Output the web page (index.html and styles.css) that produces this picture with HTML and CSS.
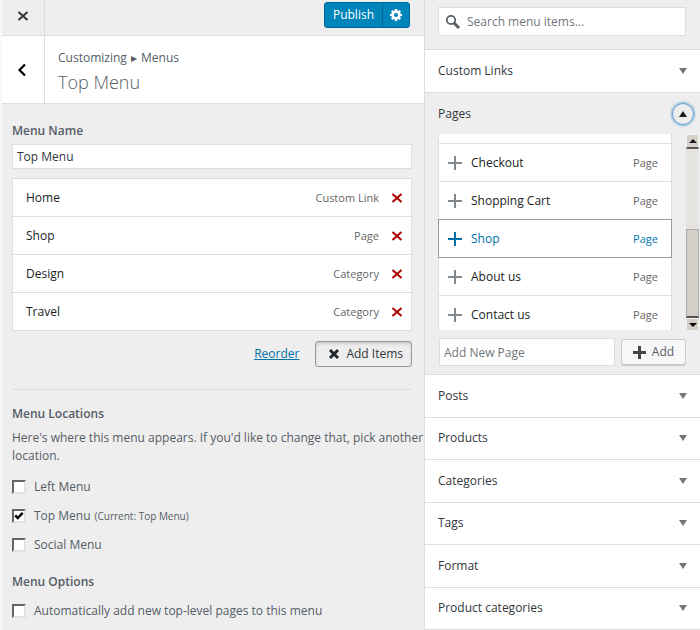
FILE: index.html
```html
<!DOCTYPE html>
<html lang="en">
<head>
  <meta charset="UTF-8" />
  <meta name="viewport" content="width=device-width, initial-scale=1.0"/>
  <title>Customize: Top Menu</title>
  <link rel="stylesheet" href="styles.css">
</head>
<body>
  <div class="customizer">
    <main class="controls">
      <header class="topbar">
        <button class="close" type="button" aria-label="Close">
          <svg width="12" height="12" viewBox="0 0 12 12"><path d="M1.5 2l9 8M10.5 2l-9 8" stroke="#333b42" stroke-width="2.2"/></svg>
        </button>
        <div class="publish">
          <button class="save" type="button">Publish</button>
          <button class="gear" type="button" aria-label="Publish settings">
            <svg width="14" height="14" viewBox="0 0 14 14">
              <g stroke="#fff" stroke-width="2.6"><path d="M7 1v12M1 7h12M2.8 2.8l8.4 8.4M11.2 2.8l-8.4 8.4"/></g>
              <circle cx="7" cy="7" r="4.4" fill="#fff"/>
              <circle cx="7" cy="7" r="2" fill="#0085ba"/>
            </svg>
          </button>
        </div>
      </header>

      <div class="section-title">
        <button class="back" type="button" aria-label="Back">
          <svg width="12" height="14" viewBox="0 0 12 14"><path d="M9 1.5L3.5 7 9 12.5" fill="none" stroke="#000" stroke-width="2.2"/></svg>
        </button>
        <div class="titles">
          <span class="crumbs">Customizing <span class="arrow">&#9656;</span> Menus</span>
          <h1>Top Menu</h1>
        </div>
      </div>

      <div class="panel">
        <label class="heading" for="menuName">Menu Name</label>
        <input class="text-field menu-name" id="menuName" type="text" value="Top Menu">

        <ul class="items">
          <li><span class="name">Home</span><span class="type">Custom Link</span><button class="remove" type="button" aria-label="Remove Home"><svg width="12" height="12" viewBox="0 0 12 12"><path d="M1.5 2l9 8M10.5 2l-9 8"/></svg></button></li>
          <li><span class="name">Shop</span><span class="type">Page</span><button class="remove" type="button" aria-label="Remove Shop"><svg width="12" height="12" viewBox="0 0 12 12"><path d="M1.5 2l9 8M10.5 2l-9 8"/></svg></button></li>
          <li><span class="name">Design</span><span class="type">Category</span><button class="remove" type="button" aria-label="Remove Design"><svg width="12" height="12" viewBox="0 0 12 12"><path d="M1.5 2l9 8M10.5 2l-9 8"/></svg></button></li>
          <li><span class="name">Travel</span><span class="type">Category</span><button class="remove" type="button" aria-label="Remove Travel"><svg width="12" height="12" viewBox="0 0 12 12"><path d="M1.5 2l9 8M10.5 2l-9 8"/></svg></button></li>
        </ul>

        <div class="actions">
          <a class="reorder" href="#">Reorder</a>
          <button class="button add-items" type="button">
            <svg width="12" height="12" viewBox="0 0 12 12"><path d="M2 2l8 8M10 2l-8 8" stroke="#23282d" stroke-width="3"/></svg>
            Add Items
          </button>
        </div>

        <hr>

        <h2 class="heading">Menu Locations</h2>
        <p class="description">Here's where this menu appears. If you'd like to change that, pick another location.</p>
        <div class="checks">
          <label><input type="checkbox">Left Menu</label>
          <label><input type="checkbox" checked>Top Menu <small>(Current: Top Menu)</small></label>
          <label><input type="checkbox">Social Menu</label>
        </div>

        <h2 class="heading">Menu Options</h2>
        <div class="checks options">
          <label><input type="checkbox">Automatically add new top-level pages to this menu</label>
        </div>
      </div>
    </main>

    <aside class="available">
      <div class="search">
        <label class="search-box">
          <svg width="16" height="16" viewBox="0 0 16 16"><circle cx="6" cy="6" r="4.2" fill="none" stroke="#555d66" stroke-width="1.8"/><path d="M9 9l5 5" stroke="#555d66" stroke-width="3"/></svg>
          <input type="search" placeholder="Search menu items..." aria-label="Search menu items">
        </label>
      </div>

      <button class="accordion" type="button">Custom Links<span class="caret"></span></button>

      <section class="pages">
        <button class="accordion open" type="button" aria-expanded="true">Pages<span class="ring"><span class="caret up"></span></span></button>
        <div class="scroller">
          <ul class="page-list">
            <li class="cut"></li>
            <li><svg class="plus" width="14" height="14" viewBox="0 0 14 14"><path d="M7 0v14M0 7h14"/></svg><span class="name">Checkout</span><span class="type">Page</span></li>
            <li><svg class="plus" width="14" height="14" viewBox="0 0 14 14"><path d="M7 0v14M0 7h14"/></svg><span class="name">Shopping Cart</span><span class="type">Page</span></li>
            <li class="selected"><svg class="plus" width="14" height="14" viewBox="0 0 14 14"><path d="M7 0v14M0 7h14"/></svg><span class="name">Shop</span><span class="type">Page</span></li>
            <li><svg class="plus" width="14" height="14" viewBox="0 0 14 14"><path d="M7 0v14M0 7h14"/></svg><span class="name">About us</span><span class="type">Page</span></li>
            <li><svg class="plus" width="14" height="14" viewBox="0 0 14 14"><path d="M7 0v14M0 7h14"/></svg><span class="name">Contact us</span><span class="type">Page</span></li>
          </ul>
          <div class="scrollbar" aria-hidden="true">
            <span class="step"><span class="caret up"></span></span>
            <span class="track"></span>
            <span class="thumb"></span>
            <span class="step"><span class="caret"></span></span>
          </div>
        </div>
        <div class="new-page">
          <input class="text-field" type="text" placeholder="Add New Page" aria-label="Add New Page">
          <button class="button add" type="button">
            <svg width="13" height="13" viewBox="0 0 13 13"><path d="M6.5 0v13M0 6.5h13" stroke="#444" stroke-width="3"/></svg>
            Add
          </button>
        </div>
      </section>

      <div class="groups">
        <button class="accordion" type="button">Posts<span class="caret"></span></button>
        <button class="accordion" type="button">Products<span class="caret"></span></button>
        <button class="accordion" type="button">Categories<span class="caret"></span></button>
        <button class="accordion" type="button">Tags<span class="caret"></span></button>
        <button class="accordion" type="button">Format<span class="caret"></span></button>
        <button class="accordion" type="button">Product categories<span class="caret"></span></button>
      </div>
    </aside>
  </div>
</body>
</html>
```

FILE: styles.css
```css
* {
  box-sizing: border-box;
}
body {
  margin: 0;
  background: #eee;
  color: #555d66;
  font-family: "Open Sans", "Noto Sans", sans-serif;
  font-size: 12px;
  line-height: 18px;
}
button,
input {
  font: inherit;
  color: inherit;
}
button {
  margin: 0;
  padding: 0;
  border: 0;
  background: none;
}
svg {
  display: block;
  flex: none;
}
ul {
  list-style: none;
  margin: 0;
  padding: 0;
}
.customizer {
  display: grid;
  grid-template-columns: minmax(0, 17fr) minmax(0, 11fr);
  min-height: 100vh;
}

/* left column */
.controls {
  border-left: 2px solid #f8f8f8;
  border-right: 1px solid #ddd;
}
.topbar {
  display: flex;
  justify-content: space-between;
  height: 36px;
  border-bottom: 1px solid #ddd;
}
.close,
.back {
  display: flex;
  align-items: center;
  justify-content: center;
  width: 43px;
  border-right: 1px solid #ddd;
}
.close {
  padding-bottom: 4px;
}
.back {
  padding-right: 2px;
}
.publish {
  display: flex;
  height: 26px;
  margin: 2px 14px 0 0;
  border: 1px solid #006799;
  border-radius: 3px;
  background: #0085ba;
  color: #fff;
}
.save {
  padding: 0 8px;
}
.gear {
  display: flex;
  align-items: center;
  padding: 0 6px;
  border-left: 1px solid #006799;
}
.section-title {
  display: flex;
  height: 68px;
  background: #fff;
  border-bottom: 1px solid #ddd;
}
.titles {
  padding: 13px 13px 0;
}
.crumbs {
  display: block;
}
.arrow {
  margin: 0 1px;
}
h1 {
  margin: 2px 0 0;
  font-size: 18px;
  font-weight: 300;
  line-height: 26px;
}
.panel {
  padding: 17px 12px 8px 10px;
}
.heading {
  display: block;
  margin: 0;
  font-size: 12px;
  font-weight: 600;
  line-height: 20px;
}
.text-field {
  width: 100%;
  border: 1px solid #ddd;
  background: #fff;
  padding: 0 4px;
  color: #32373c;
}
.text-field::placeholder,
.search-box input::placeholder {
  color: #72777c;
  opacity: 1;
}
.menu-name {
  display: block;
  height: 25px;
  margin: 3px 0 9px;
}
.items li,
.page-list li {
  display: flex;
  align-items: center;
  height: 39px;
  border: 1px solid #ddd;
  background: #fff;
}
.items li {
  padding: 0 8px 0 13px;
}
.items li + li,
.page-list li + li {
  margin-top: -1px;
}
.name {
  flex: 1;
  color: #191e23;
  font-weight: 500;
}
.type {
  font-size: 11px;
  color: #666;
}
.remove {
  margin-left: 12px;
}
.remove path {
  stroke: #a00;
  stroke-width: 2;
}
.actions {
  display: flex;
  align-items: center;
  justify-content: flex-end;
  gap: 16px;
  margin: 10px 0 22px;
}
.reorder {
  color: #0073aa;
}
.button {
  display: flex;
  align-items: center;
  justify-content: center;
  gap: 6px;
  height: 26px;
  border: 1px solid #ccc;
  border-radius: 3px;
  background: #f7f7f7;
  box-shadow: 0 1px 0 #ccc;
}
.add-items {
  gap: 6px;
  padding: 0 8px 0 12px;
  border-color: #999;
  background: #eee;
  box-shadow: inset 0 2px 4px -2px #999;
  color: #32373c;
}
hr {
  margin: 0 0 14px;
  border: 0;
  border-top: 1px solid #ddd;
}
.description {
  margin: 5px -12px 13px 0;
}
.checks {
  display: flex;
  flex-direction: column;
  gap: 11px;
  margin-bottom: 18px;
}
.checks label {
  display: flex;
  align-items: center;
}
.options {
  margin: 10px 0 0;
}
.checks small {
  margin-left: 4px;
  font-size: 10px;
}
.checks input {
  appearance: none;
  width: 14px;
  height: 14px;
  margin: 0 8px 0 0;
  border: 2px solid;
  border-color: #666 #e4e2de #e4e2de #666;
  background: #fff center / 10px 10px no-repeat;
}
.checks input:checked {
  background-image: url("data:image/svg+xml,%3Csvg xmlns='http://www.w3.org/2000/svg' viewBox='0 0 8 8'%3E%3Cpath d='M1 3.5l2 2.2L7 1.5' fill='none' stroke='%23000' stroke-width='1.9'/%3E%3C/svg%3E");
}

/* right column */
.available {
  display: flex;
  flex-direction: column;
}
.search {
  padding: 7px 14px 13px 13px;
}
.search-box {
  display: flex;
  align-items: center;
  gap: 6px;
  height: 29px;
  padding: 0 6px;
  border: 1px solid #ddd;
  background: #fff;
}
.search-box input {
  flex: 1;
  min-width: 0;
  padding: 0;
  border: 0;
  outline: 0;
  background: none;
}
.accordion {
  display: flex;
  align-items: center;
  justify-content: space-between;
  width: 100%;
  height: 43px;
  padding: 0 13px;
  border-top: 1px solid #ddd;
  background: #fff;
  color: #32373c;
  font-weight: 500;
}
.accordion.open {
  height: 42px;
  padding-right: 6px;
  background: none;
}
.caret {
  border: 4px solid transparent;
  border-top: 6px solid #72777c;
  border-bottom: 0;
}
.caret.up {
  border-top: 0;
  border-bottom: 6px solid #191e23;
}
.ring {
  display: flex;
  align-items: center;
  justify-content: center;
  width: 22px;
  height: 22px;
  border: 1px solid #5b9dd9;
  border-radius: 50%;
  box-shadow: 0 0 2px 1px rgba(30, 140, 190, .5);
}
.scroller {
  display: flex;
  justify-content: space-between;
  height: 196px;
  padding: 0 1px 0 13px;
  overflow: hidden;
}
.page-list {
  flex: 1;
  margin-right: 14px;
}
.page-list li {
  flex: none;
  gap: 9px;
  padding: 0 13px 0 9px;
}
.page-list .cut {
  height: 10px;
  border-top: 0;
}
.plus path {
  stroke: #82878c;
  stroke-width: 2;
}
.page-list .selected {
  position: relative;
  border-color: #999;
}
.selected .name,
.selected .type {
  color: #0073aa;
}
.selected .plus path {
  stroke: #0073aa;
}
.scrollbar {
  display: flex;
  flex-direction: column;
  width: 13px;
}
.step {
  display: flex;
  align-items: center;
  justify-content: center;
  height: 15px;
  border: 1px solid #f5f3f0;
  border-bottom: 2px solid #555;
  background: #d4d0c8;
}
.step .caret {
  border-width: 4px 4px 0;
  border-top-color: #000;
}
.step .caret.up {
  border-width: 0 4px 4px;
}
.step:last-child {
  height: 12px;
  border-bottom: 0;
}
.track {
  flex: 1;
  background: #e6e4e0;
}
.thumb {
  height: 89px;
  border: 1px solid #aaa;
  border-bottom: 2px solid #555;
  background: #d4d0c8;
}
.new-page {
  display: flex;
  align-items: center;
  gap: 6px;
  padding: 8px 14px;
}
.new-page .text-field {
  flex: 1;
  min-width: 0;
  height: 28px;
}
.add {
  width: 65px;
}
.groups {
  flex: 1;
  display: flex;
  flex-direction: column;
  border-bottom: 1px solid #ddd;
}
.groups .accordion {
  flex: 1;
  height: auto;
  min-height: 42px;
}
```
